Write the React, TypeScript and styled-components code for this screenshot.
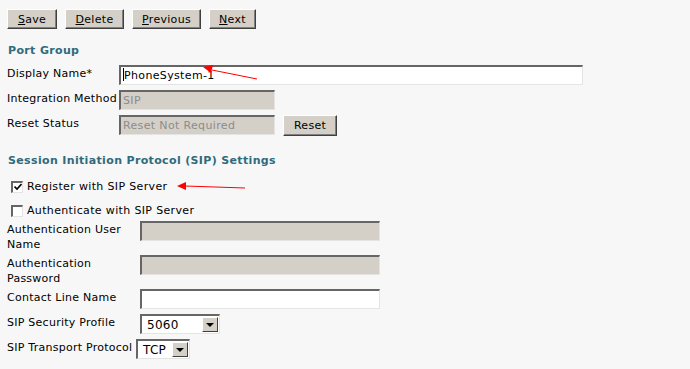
import styled, { createGlobalStyle } from 'styled-components';

const GlobalStyle = createGlobalStyle`
  html, body {
    margin: 0;
    padding: 0;
    background: #f7f7f7;
  }
  body {
    font-family: 'DejaVu Sans', Verdana, sans-serif;
    font-size: 11px;
    letter-spacing: 0.25px;
    color: #000000;
  }
`;

const Page = styled.div`
  position: relative;
  width: 690px;
  height: 369px;
  box-sizing: border-box;
  padding: 9px 0 0 7px;
  overflow: hidden;
`;

const Toolbar = styled.div`
  display: flex;
  gap: 8px;
`;

const Button = styled.button<{ $w: number }>`
  width: ${(p) => p.$w}px;
  height: 20px;
  padding: 0;
  font-family: inherit;
  font-size: 11px;
  letter-spacing: 0.3px;
  color: #000;
  background: #d4d0c8;
  border: 1px solid;
  border-color: #ffffff #404040 #404040 #ffffff;
  box-shadow: inset -1px -1px 0 #808080;
  u {
    text-decoration: underline;
  }
`;

const SectionTitle = styled.div<{ $top: number; $bottom: number }>`
  margin: ${(p) => p.$top}px 0 ${(p) => p.$bottom}px 1px;
  font-weight: bold;
  line-height: 15px;
  letter-spacing: 0.35px;
  color: #2f6b7c;
`;

const Row = styled.div`
  display: flex;
  align-items: flex-start;
  margin-bottom: 4px;
`;

const Label = styled.div<{ $w: number }>`
  flex: 0 0 auto;
  min-width: ${(p) => p.$w}px;
  max-width: ${(p) => p.$w}px;
  padding-top: 2px;
  margin-bottom: -2px;
  line-height: 15px;
  white-space: nowrap;
`;

const WideLabel = styled(Label)`
  max-width: none;
  padding-right: 1px;
`;

const WrapLabel = styled(Label)`
  white-space: normal;
`;

const TextBox = styled.div<{ $w: number; $disabled?: boolean }>`
  box-sizing: border-box;
  width: ${(p) => p.$w}px;
  height: 20px;
  margin-top: 1px;
  padding: 0 2px;
  line-height: 17px;
  letter-spacing: 0.35px;
  background: ${(p) => (p.$disabled ? '#d4d0c8' : '#ffffff')};
  color: ${(p) => (p.$disabled ? '#8c8c8c' : '#000000')};
  border: 2px solid;
  border-color: #666666 #e4e4e4 #e4e4e4 #666666;
  border-width: 2px 1px 1px 2px;
  white-space: nowrap;
  overflow: hidden;
`;

const Caret = styled.span`
  display: inline-block;
  width: 1px;
  height: 13px;
  background: #000;
  vertical-align: -2px;
`;

const SideButton = styled(Button)`
  margin-left: 8px;
  margin-top: 1px;
  height: 21px;
`;

const Select = styled.div<{ $w: number }>`
  box-sizing: border-box;
  display: flex;
  align-items: center;
  justify-content: space-between;
  width: ${(p) => p.$w}px;
  height: 20px;
  margin-top: 1px;
  padding: 0 1px 0 5px;
  background: #ffffff;
  border: 2px solid;
  border-color: #666666 #e4e4e4 #e4e4e4 #666666;
  border-width: 2px 1px 1px 2px;
  font-size: 12px;
`;

const SelectArrow = styled.div`
  box-sizing: border-box;
  display: flex;
  align-items: center;
  justify-content: center;
  width: 16px;
  height: 15px;
  background: #d4d0c8;
  border: 1px solid;
  border-color: #ffffff #404040 #404040 #ffffff;
  &::after {
    content: '';
    border-left: 4px solid transparent;
    border-right: 4px solid transparent;
    border-top: 4px solid #000;
  }
`;

const CheckRow = styled.div<{ $bottom: number }>`
  display: flex;
  align-items: center;
  height: 15px;
  margin: 0 0 ${(p) => p.$bottom}px 4px;
  line-height: 15px;
  letter-spacing: 0.35px;
  gap: 4px;
`;

const CheckBox = styled.span`
  box-sizing: border-box;
  display: inline-flex;
  align-items: center;
  justify-content: center;
  width: 12px;
  height: 12px;
  background: #ffffff;
  border: 2px solid;
  border-color: #666666 #e4e4e4 #e4e4e4 #666666;
  border-width: 2px 1px 1px 2px;
`;

const Arrows = styled.svg`
  position: absolute;
  left: 0;
  top: 0;
  pointer-events: none;
`;

export default function App() {
  return (
    <>
      <GlobalStyle />
      <Page>
        <Toolbar>
          <Button $w={50}><u>S</u>ave</Button>
          <Button $w={59}><u>D</u>elete</Button>
          <Button $w={69}><u>P</u>revious</Button>
          <Button $w={47}><u>N</u>ext</Button>
        </Toolbar>

        <SectionTitle $top={14} $bottom={6}>Port Group</SectionTitle>
        <Row>
          <Label $w={112}>Display Name*</Label>
          <TextBox $w={464}><Caret />PhoneSystem-1</TextBox>
        </Row>
        <Row>
          <Label $w={112}>Integration Method</Label>
          <TextBox $w={156} $disabled>SIP</TextBox>
        </Row>
        <Row>
          <Label $w={112}>Reset Status</Label>
          <TextBox $w={156} $disabled>Reset Not Required</TextBox>
          <SideButton $w={54}>Reset</SideButton>
        </Row>

        <SectionTitle $top={17} $bottom={11}>Session Initiation Protocol (SIP) Settings</SectionTitle>
        <CheckRow $bottom={9}>
          <CheckBox>
            <svg width="8" height="8" viewBox="0 0 8 8">
              <path d="M0.5 3.5 L3 6 L7.5 1" fill="none" stroke="#000" strokeWidth="1.6" />
            </svg>
          </CheckBox>
          Register with SIP Server
        </CheckRow>
        <CheckRow $bottom={2}>
          <CheckBox />
          Authenticate with SIP Server
        </CheckRow>
        <Row>
          <WrapLabel $w={133}>Authentication User Name</WrapLabel>
          <TextBox $w={240} $disabled />
        </Row>
        <Row>
          <WrapLabel $w={133}>Authentication Password</WrapLabel>
          <TextBox $w={240} $disabled />
        </Row>
        <Row>
          <Label $w={133}>Contact Line Name</Label>
          <TextBox $w={240} />
        </Row>
        <Row>
          <Label $w={133}>SIP Security Profile</Label>
          <Select $w={80}>
            5060
            <SelectArrow />
          </Select>
        </Row>
        <Row>
          <WideLabel $w={128}>SIP Transport Protocol</WideLabel>
          <Select $w={54}>
            TCP
            <SelectArrow />
          </Select>
        </Row>

        <Arrows width="690" height="369" viewBox="0 0 690 369">
          <line x1="257" y1="79" x2="212" y2="70" stroke="#ff0000" strokeWidth="1" />
          <polygon points="203,67 213,65 211,73" fill="#ff0000" />
          <line x1="245" y1="188" x2="185" y2="186" stroke="#ff0000" strokeWidth="1" />
          <polygon points="177,186 186,182 186,190" fill="#ff0000" />
        </Arrows>
      </Page>
    </>
  );
}
